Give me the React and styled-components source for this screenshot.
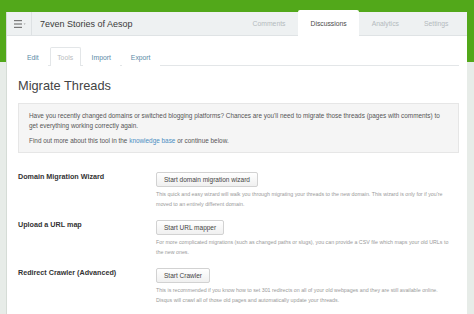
import React from 'react'
import styled, { createGlobalStyle } from 'styled-components'

const GlobalStyle = createGlobalStyle`
    html, body {
        margin: 0;
        padding: 0;
    }
    body {
        font-family: "Liberation Sans", Arial, sans-serif;
        background: #e7ece8;
    }
`

const topTabs = ['Comments', 'Discussions', 'Analytics', 'Settings']
const subTabs = ['Edit', 'Tools', 'Import', 'Export']

const rows = [
    {
        label: 'Domain Migration Wizard',
        button: 'Start domain migration wizard',
        text: "This quick and easy wizard will walk you through migrating your threads to the new domain. This wizard is only for if you're moved to an entirely different domain.",
    },
    {
        label: 'Upload a URL map',
        button: 'Start URL mapper',
        text: 'For more complicated migrations (such as changed paths or slugs), you can provide a CSV file which maps your old URLs to the new ones.',
    },
    {
        label: 'Redirect Crawler (Advanced)',
        button: 'Start Crawler',
        text: 'This is recommended if you know how to set 301 redirects on all of your old webpages and they are still available online. Disqus will crawl all of those old pages and automatically update your threads.',
    },
]

function App() {
    return (
        <Page>
            <GlobalStyle />
            <Panel>
                <Header>
                    <MenuCell>
                        <svg width="12" height="8" viewBox="0 0 12 8">
                            <rect x="0" y="0" width="8" height="1.2" fill="#777" />
                            <rect x="0" y="3.4" width="8" height="1.2" fill="#777" />
                            <rect x="0" y="6.8" width="8" height="1.2" fill="#777" />
                            <path d="M9.6 3.6 L11.6 3.6 L10.6 4.8 Z" fill="#999" />
                        </svg>
                    </MenuCell>
                    <SiteTitle>7even Stories of Aesop</SiteTitle>
                    <TopTabs>
                        {topTabs.map(t => (
                            <TopTab key={t} active={t === 'Discussions'}>{t}</TopTab>
                        ))}
                    </TopTabs>
                </Header>

                <Content>
                    <SubNav>
                        {subTabs.map(t => (
                            <SubTab key={t} active={t === 'Tools'}>{t}</SubTab>
                        ))}
                    </SubNav>

                    <Title>Migrate Threads</Title>

                    <InfoBox>
                        <p>Have you recently changed domains or switched blogging platforms? Chances are you'll need to migrate those threads (pages with comments) to get everything working correctly again.</p>
                        <p>Find out more about this tool in the <a href="#">knowledge base</a> or continue below.</p>
                    </InfoBox>

                    <Rows>
                        {rows.map(r => (
                            <Row key={r.label}>
                                <Label>{r.label}</Label>
                                <div>
                                    <Button>{r.button}</Button>
                                    <Desc>{r.text}</Desc>
                                </div>
                            </Row>
                        ))}
                    </Rows>
                </Content>
            </Panel>
        </Page>
    )
}

export default App

const Page = styled.div`
    min-height: 100vh;
    box-sizing: border-box;
    padding: 12px 7px 0 7px;
    background: linear-gradient(#52a81a 0 62px, #e7ece8 62px);
`

const Panel = styled.div`
    background: #fff;
    min-height: calc(100vh - 12px);
    box-shadow: -1px 0 0 #d5dcd6;
`

const Header = styled.div`
    display: flex;
    align-items: stretch;
    height: 23px;
    background: #eef1f2;
    border-bottom: 1px solid #dfe3e5;
`

const MenuCell = styled.div`
    width: 25px;
    display: flex;
    align-items: center;
    justify-content: center;
    border-right: 1px solid #dde1e3;
    padding-left: 2px;
    box-sizing: border-box;
`

const SiteTitle = styled.div`
    flex: 1;
    display: flex;
    align-items: center;
    padding-left: 8px;
    font-size: 9px;
    color: #3a3a3a;
`

const TopTabs = styled.div`
    display: flex;
    align-items: stretch;
    margin-right: 6px;
`

const TopTab = styled.div`
    display: flex;
    align-items: center;
    padding: 0 12.5px;
    font-size: 6.8px;
    color: ${p => (p.active ? '#4a4a4a' : '#b4babd')};
    background: ${p => (p.active ? '#fff' : 'transparent')};
    margin-top: ${p => (p.active ? '-2px' : '0')};
    margin-bottom: ${p => (p.active ? '-1px' : '0')};
    border-radius: 2px 2px 0 0;
`

const Content = styled.div`
    padding: 11px 8px 0 11px;
`

const SubNav = styled.div`
    display: flex;
    align-items: stretch;
    height: 18px;
    border-bottom: 1px solid #e3e6e8;
`

const SubTab = styled.div`
    display: flex;
    align-items: center;
    padding: 0 ${p => (p.active ? '6.5px' : '8px')};
    margin-right: 2px;
    font-size: 6.8px;
    color: ${p => (p.active ? '#b8bcbe' : '#5a8aa6')};
    background: #fff;
    border: 1px solid ${p => (p.active ? '#e3e6e8' : 'transparent')};
    border-bottom: none;
    border-radius: 2px 2px 0 0;
    margin-bottom: -1px;
`

const Title = styled.h1`
    margin: 12px 0 0 0;
    font-size: 12.8px;
    line-height: 16px;
    font-weight: normal;
    color: #444;
`

const InfoBox = styled.div`
    margin-top: 9px;
    background: #f5f5f5;
    border: 1px solid #e6e6e6;
    padding: 7px 10px 6px 10px;
    font-size: 6.4px;
    line-height: 10px;
    color: #555;

    p {
        margin: 0;
    }
    p + p {
        margin-top: 5px;
    }
    a {
        color: #4b8ec2;
        text-decoration: none;
    }
`

const Rows = styled.div`
    display: flex;
    flex-direction: column;
    gap: 11px;
    margin-top: 19px;
`

const Row = styled.div`
    display: grid;
    grid-template-columns: 138px 1fr;
`

const Label = styled.div`
    font-size: 7.2px;
    font-weight: bold;
    line-height: 10px;
    color: #333;
`

const Button = styled.button`
    display: block;
    height: 15px;
    padding: 0 7px;
    font-family: inherit;
    font-size: 6.5px;
    color: #444;
    background: linear-gradient(#ffffff, #f0f0f0);
    border: 1px solid #d2d2d2;
    border-radius: 2px;
    cursor: pointer;
`

const Desc = styled.p`
    margin: 3px 0 0 0;
    font-size: 5.3px;
    line-height: 9.5px;
    color: #9a9a9a;
    padding-right: 4px;
`
